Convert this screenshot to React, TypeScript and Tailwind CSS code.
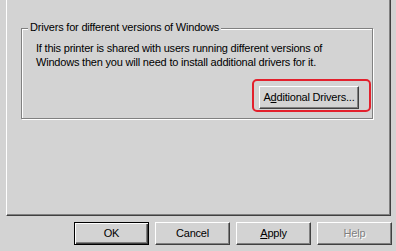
import React from "react";

const btn =
  "flex items-center justify-center w-[75px] h-[23px] bg-[#d3d3d3] border border-t-white border-l-white border-r-[#404040] border-b-[#404040] shadow-[inset_-1px_-1px_0_#808080]";

const App: React.FC = () => {
  return (
    <div className="w-[396px] h-[251px] overflow-hidden bg-[#d3d3d3] text-[11px] leading-[13px] tracking-[-0.2px] text-black font-['Liberation_Sans',Arial,sans-serif]">
      {/* tab page */}
      <div className="ml-[6px] w-[385px] h-[216px] border-l border-l-white border-r border-r-[#404040] border-b border-b-[#404040] shadow-[inset_-1px_-1px_0_#808080] pt-[28px] pl-[14px]">
        {/* group box */}
        <div className="relative flex flex-col w-[352px] h-[91px] border border-[#808080] shadow-[1px_1px_0_#fff,inset_1px_1px_0_#fff]">
          <span className="absolute left-[6px] top-[-8px] px-[2px] bg-[#d3d3d3]">
            Drivers for different versions of Windows
          </span>
          <p className="pl-[14px] pt-[12px] leading-[14px]">
            If this printer is shared with users running different versions of
            <br />
            Windows then you will need to install additional drivers for it.
          </p>
          <div className="mt-auto flex justify-end pr-[13px] pb-[9px]">
            <button className={btn + " w-[100px]"}>
              A<span className="underline">d</span>ditional Drivers...
            </button>
          </div>
          {/* highlight */}
          <div className="absolute left-[230px] top-[50px] w-[119px] h-[33px] border-2 border-[#e3202c] rounded-[5px]"></div>
        </div>
      </div>
      {/* dialog buttons */}
      <div className="mt-[6px] flex justify-end gap-[6px] pr-[4px]">
        <button className="flex items-center justify-center w-[75px] h-[23px] bg-[#d3d3d3] border border-black shadow-[inset_1px_1px_0_#fff,inset_-1px_-1px_0_#404040,inset_-2px_-2px_0_#808080]">
          OK
        </button>
        <button className={btn}>Cancel</button>
        <button className={btn}>
          <span className="underline">A</span>pply
        </button>
        <button className={btn + " text-[#808080] [text-shadow:1px_1px_0_#fff]"}>
          Help
        </button>
      </div>
    </div>
  );
};

export default App;
